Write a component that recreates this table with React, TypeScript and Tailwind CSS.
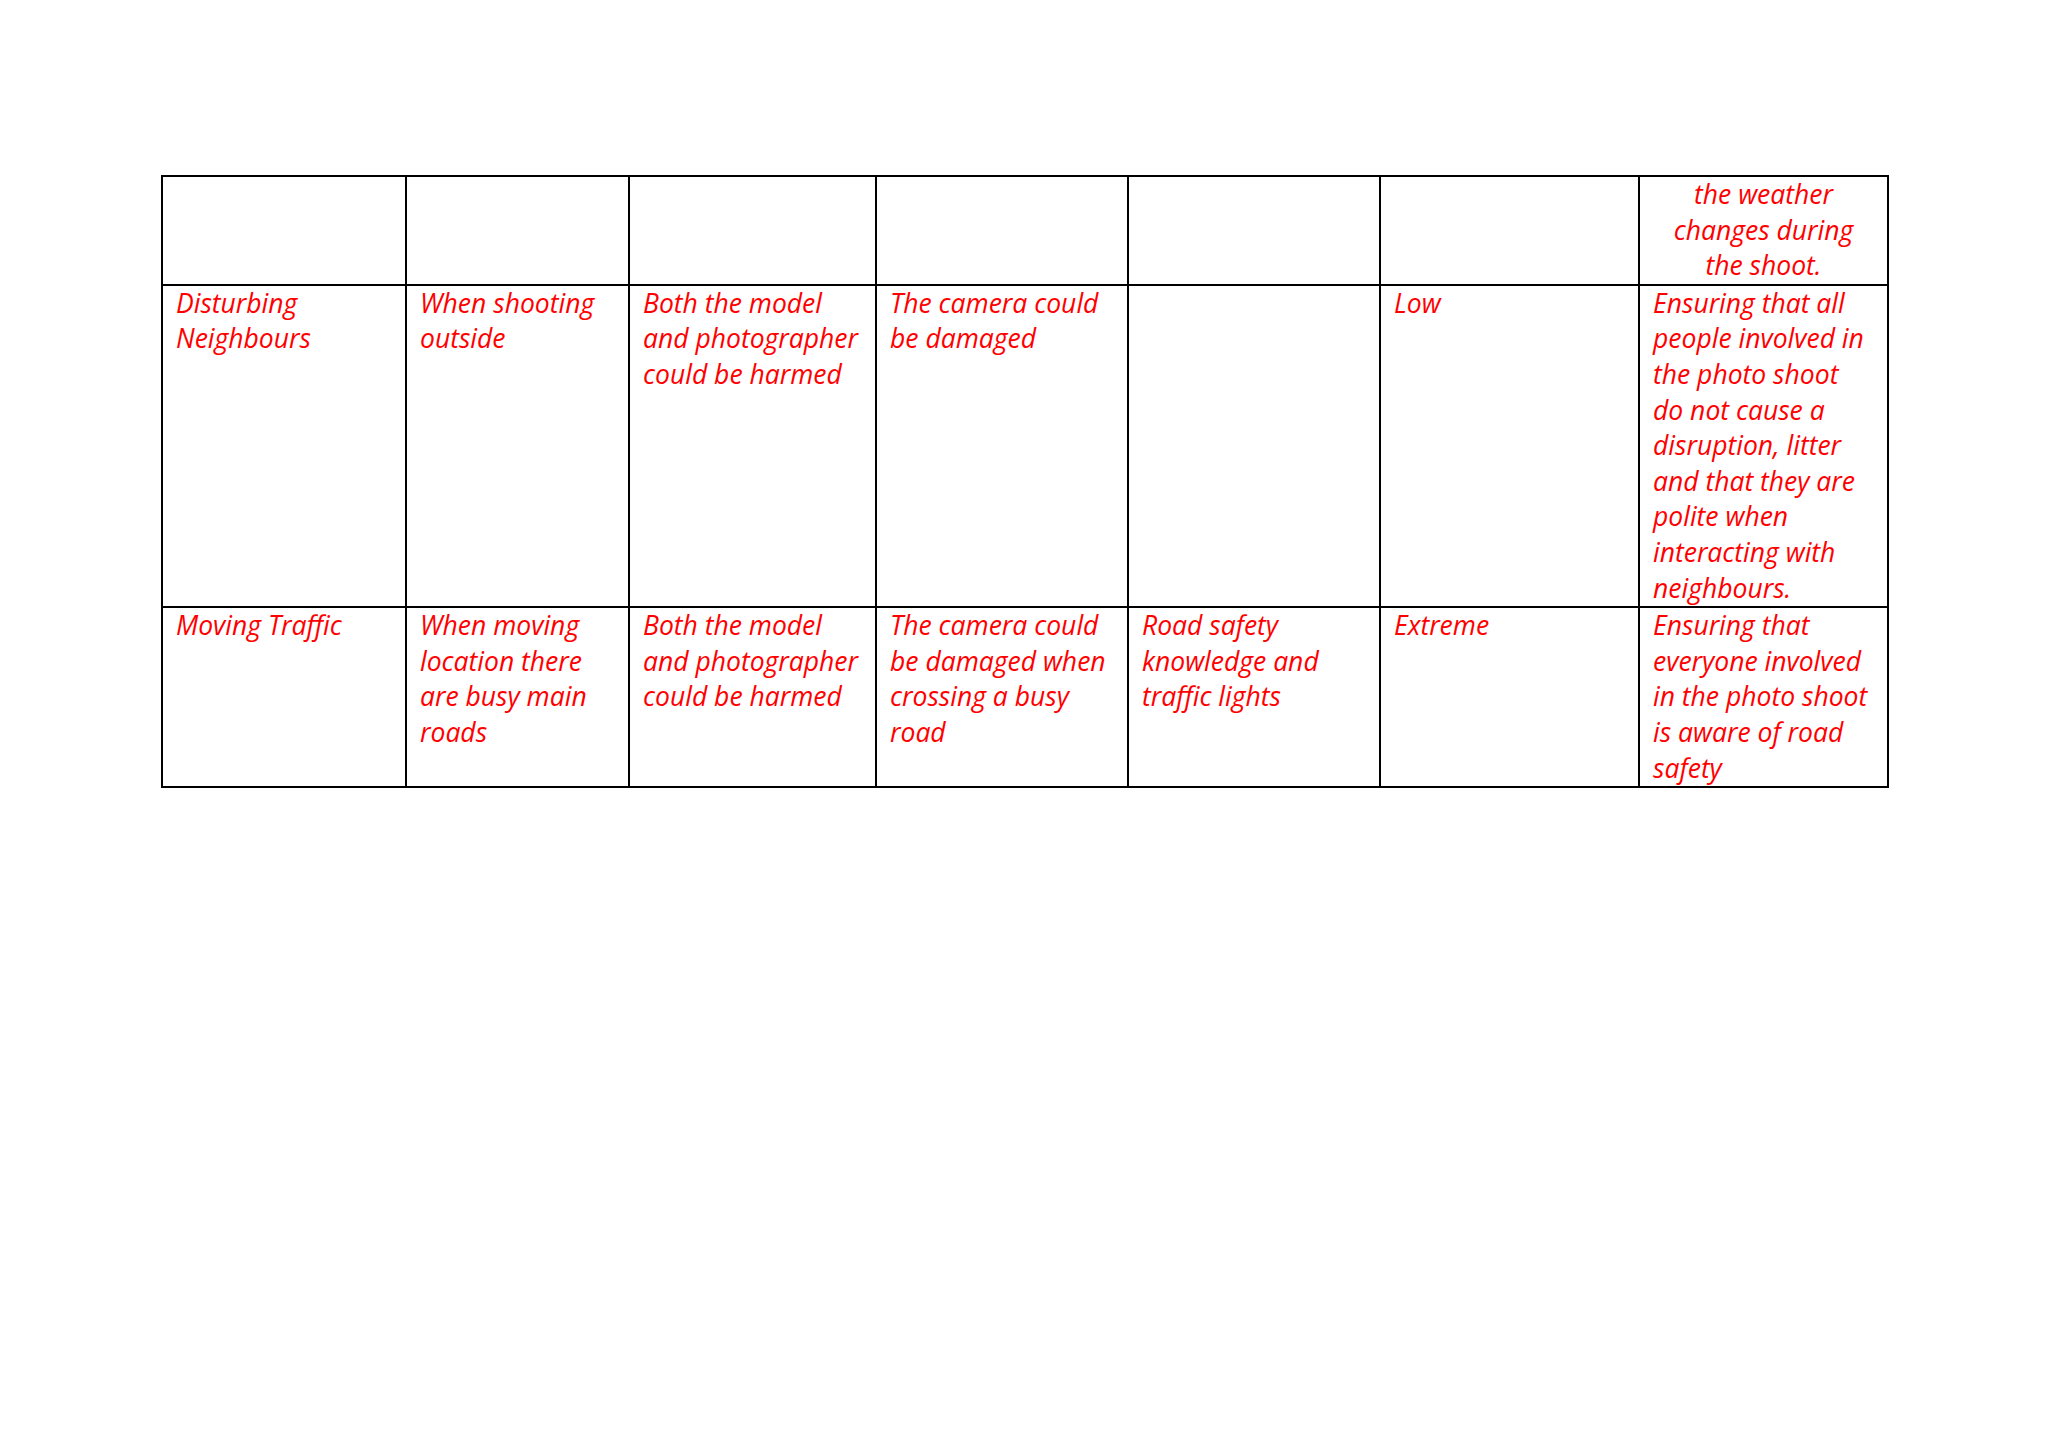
import React from "react";

type Cell = { text?: string; center?: boolean };

const rows: Cell[][] = [
  [{}, {}, {}, {}, {}, {}, { text: "the weather changes during the shoot.", center: true }],
  [
    { text: "Disturbing Neighbours" },
    { text: "When shooting outside" },
    { text: "Both the model and photographer could be harmed" },
    { text: "The camera could be damaged" },
    {},
    { text: "Low" },
    {
      text: "Ensuring that all people involved in the photo shoot do not cause a disruption, litter and that they are polite when interacting with neighbours.",
    },
  ],
  [
    { text: "Moving Traffic" },
    { text: "When moving location there are busy main roads" },
    { text: "Both the model and photographer could be harmed" },
    { text: "The camera could be damaged when crossing a busy road" },
    { text: "Road safety knowledge and traffic lights" },
    { text: "Extreme" },
    { text: "Ensuring that everyone involved in the photo shoot is aware of road safety" },
  ],
];

export default function App() {
  return (
    <div className="min-h-[1448px] w-full bg-white pt-[175px] pl-[161px]">
      <table className="border-collapse table-fixed w-[1726px]">
        <colgroup>
          <col className="w-[244px]" />
          <col className="w-[223px]" />
          <col className="w-[247px]" />
          <col className="w-[252px]" />
          <col className="w-[252px]" />
          <col className="w-[259px]" />
          <col className="w-[249px]" />
        </colgroup>
        <tbody>
          {rows.map((row, ri) => (
            <tr key={ri}>
              {row.map((c, ci) => (
                <td
                  key={ci}
                  className={`border-2 border-black align-top pt-0 pb-0 italic text-[#f00] text-[26.5px] leading-[35.6px] font-['Open_Sans',sans-serif] ${
                    c.center
                      ? "text-center px-[16px]"
                      : ci === 6
                      ? "text-left pl-[13px] pr-[18px]"
                      : "text-left pl-[13px] pr-[10px]"
                  }`}
                >
                  {c.text}
                </td>
              ))}
            </tr>
          ))}
        </tbody>
      </table>
    </div>
  );
}
